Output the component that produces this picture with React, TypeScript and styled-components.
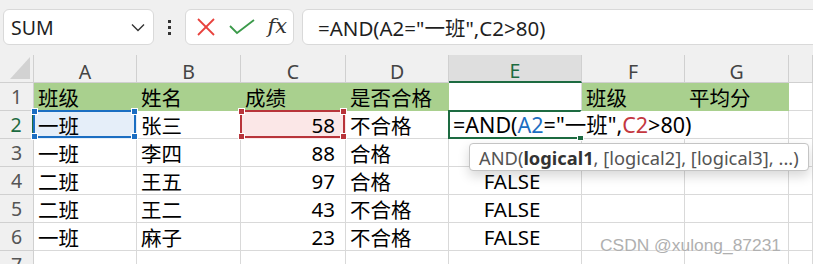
import React from "react"
import styled, { createGlobalStyle } from "styled-components"

const GlobalStyle = createGlobalStyle`
  body {
    margin: 0;
    background: #f0f0f0;
    font-family: "Noto Sans", "Noto Sans CJK SC", sans-serif;
    overflow: hidden;
  }
`

const COLS = ["A", "B", "C", "D", "E", "F", "G", ""]
const GREEN = "#a9d08e"

type Row = { cells: (string | number)[] }

const header = ["班级", "姓名", "成绩", "是否合格", "", "班级", "平均分", ""]
const data: Row[] = [
  { cells: ["一班", "张三", 58, "不合格", "", "", "", ""] },
  { cells: ["一班", "李四", 88, "合格", "", "", "", ""] },
  { cells: ["二班", "王五", 97, "合格", "FALSE", "", "", ""] },
  { cells: ["二班", "王二", 43, "不合格", "FALSE", "", "", ""] },
  { cells: ["一班", "麻子", 23, "不合格", "FALSE", "", "", ""] },
  { cells: ["", "", "", "", "", "", "", ""] },
]

function App() {
  return (
    <>
      <GlobalStyle />
      <Page>
        <Toolbar>
          <NameBox>
            <NameText>SUM</NameText>
            <svg width="14" height="9" viewBox="0 0 14 9">
              <polyline points="1,1.5 7,7.5 13,1.5" fill="none" stroke="#333" strokeWidth="1.4" />
            </svg>
          </NameBox>
          <Dots>
            <i />
            <i />
            <i />
          </Dots>
          <ActionBox>
            <svg width="20" height="20" viewBox="0 0 20 20">
              <line x1="2" y1="2" x2="18" y2="18" stroke="#e8413c" strokeWidth="1.8" />
              <line x1="18" y1="2" x2="2" y2="18" stroke="#e8413c" strokeWidth="1.8" />
            </svg>
            <svg width="26" height="16" viewBox="0 0 26 16">
              <polyline points="1,7 8,14 25,1" fill="none" stroke="#3b9a4a" strokeWidth="1.8" />
            </svg>
            <Fx>fx</Fx>
          </ActionBox>
          <FormulaBox>=AND(A2="一班",C2&gt;80)</FormulaBox>
        </Toolbar>

        <Sheet>
          <Corner>
            <svg width="20" height="22" viewBox="0 0 20 22">
              <polygon points="20,0 20,22 0,22" fill="#d2d2d2" />
            </svg>
          </Corner>
          {COLS.map((c, i) => (
            <ColHead key={i} $active={c === "E"}>{c}</ColHead>
          ))}

          <RowHead>1</RowHead>
          {header.map((t, i) => (
            <Cell key={i} $fill={t !== "" && i < 7 ? GREEN : undefined}>{t}</Cell>
          ))}

          {data.map((row, r) => (
            <React.Fragment key={r}>
              <RowHead $active={r === 0}>{r + 2}</RowHead>
              {row.cells.map((v, c) => {
                if (r === 0 && c === 0) {
                  return (
                    <Cell key={c} $fill="#e5eef9">
                      {v}
                      <RefBox $color="#1b6ec2"><Handles $color="#1b6ec2" /></RefBox>
                    </Cell>
                  )
                }
                if (r === 0 && c === 2) {
                  return (
                    <Cell key={c} $fill="#fbe7e7" $align="right">
                      {v}
                      <RefBox $color="#b8343a"><Handles $color="#b8343a" /></RefBox>
                    </Cell>
                  )
                }
                if (r === 0 && c === 4) {
                  return (
                    <EditCell key={c}>
                      <EditText>
                        =AND(<Ref $color="#1b6ec2">A2</Ref>="一班",<Ref $color="#c4373f">C2</Ref>&gt;80)
                      </EditText>
                      <FillHandle />
                    </EditCell>
                  )
                }
                return (
                  <Cell
                    key={c}
                    $align={typeof v === "number" ? "right" : c === 4 ? "center" : "left"}
                    $noRight={r === 0 && c === 5}
                  >
                    {v}
                  </Cell>
                )
              })}
            </React.Fragment>
          ))}
        </Sheet>

        <Tip>
          AND(<b>logical1</b>, [logical2], [logical3], ...)
        </Tip>
        <Watermark>CSDN @xulong_87231</Watermark>
      </Page>
    </>
  )
}

function Handles(props: { $color: string }) {
  return (
    <>
      <Knob $color={props.$color} style={{ left: -4, top: -4 }} />
      <Knob $color={props.$color} style={{ right: -4, top: -4 }} />
      <Knob $color={props.$color} style={{ left: -4, bottom: -4 }} />
      <Knob $color={props.$color} style={{ right: -4, bottom: -4 }} />
    </>
  )
}

const Page = styled.div`
  position: relative;
  width: 813px;
  height: 264px;
  overflow: hidden;
  background: #f0f0f0;
`

const Toolbar = styled.div`
  display: flex;
  align-items: center;
  height: 55px;
  padding: 9px 0 10px 3px;
  box-sizing: border-box;
`

const Box = styled.div`
  height: 36px;
  box-sizing: border-box;
  background: #fff;
  border: 1px solid #d9d9d9;
  border-radius: 6px;
  display: flex;
  align-items: center;
`

const NameBox = styled(Box)`
  width: 151px;
  flex: none;
  justify-content: space-between;
  padding: 0 8px 0 7px;
`

const NameText = styled.span`
  font-size: 19.5px;
  color: #1f1f1f;
`

const Dots = styled.div`
  width: 31px;
  flex: none;
  display: flex;
  flex-direction: column;
  align-items: center;
  gap: 3px;

  i {
    display: block;
    width: 3px;
    height: 3px;
    background: #333;
  }
`

const ActionBox = styled(Box)`
  width: 109px;
  flex: none;
  padding: 0 6px 0 10px;
  justify-content: space-between;
`

const Fx = styled.span`
  font-family: "DejaVu Serif", "Liberation Serif", serif;
  font-style: italic;
  font-size: 21px;
  color: #333;
  margin-top: -3px;
`

const FormulaBox = styled(Box)`
  flex: none;
  width: 560px;
  margin-left: 8px;
  padding-left: 15px;
  font-size: 20.5px;
  color: #1f1f1f;
  white-space: nowrap;
`

const Sheet = styled.div`
  display: grid;
  grid-template-columns: 34px 103px 104px 105px 103px 133px 103px 104px 1fr;
  grid-auto-rows: 28px;
`

const Corner = styled.div`
  box-sizing: border-box;
  border-right: 1px solid #d0d0d0;
  border-bottom: 1px solid #d0d0d0;
  display: flex;
  align-items: flex-end;
  justify-content: flex-end;
  padding: 0 3px 3px 0;
`

const ColHead = styled.div<{ $active?: boolean }>`
  box-sizing: border-box;
  display: flex;
  align-items: center;
  justify-content: center;
  padding-top: 5px;
  font-size: 19.5px;
  color: ${(p) => (p.$active ? "#1d6b41" : "#444")};
  background: ${(p) => (p.$active ? "#dedede" : "#f0f0f0")};
  border-right: 1px solid #d0d0d0;
  border-bottom: ${(p) => (p.$active ? "2px solid #1d6b41" : "1px solid #d0d0d0")};
`

const RowHead = styled.div<{ $active?: boolean }>`
  box-sizing: border-box;
  display: flex;
  align-items: center;
  justify-content: center;
  font-size: 19.5px;
  color: ${(p) => (p.$active ? "#1d6b41" : "#555")};
  border-right: ${(p) => (p.$active ? "2px solid #1d6b41" : "1px solid #d0d0d0")};
  border-bottom: 1px solid #d0d0d0;
`

const Cell = styled.div<{ $fill?: string; $align?: "left" | "right" | "center"; $noRight?: boolean }>`
  position: relative;
  box-sizing: border-box;
  display: flex;
  align-items: center;
  justify-content: ${(p) => (p.$align === "right" ? "flex-end" : p.$align === "center" ? "center" : "flex-start")};
  padding: 0 10px 0 4px;
  font-size: 20.5px;
  color: #000;
  white-space: nowrap;
  background: ${(p) => p.$fill ?? "#fff"};
  border-right: 1px solid ${(p) => (p.$noRight ? "#fff" : p.$fill ?? "#d9d9d9")};
  border-bottom: 1px solid ${(p) => p.$fill ?? "#d9d9d9"};
`

const EditCell = styled.div`
  position: relative;
  z-index: 3;
  box-sizing: border-box;
  display: flex;
  align-items: center;
  padding-left: 3px;
  background: #fff;
  border: 2px solid #1d6b41;
  border-right-color: #fff;
  margin: -1px 0 0 -1px;
`

const EditText = styled.span`
  position: relative;
  z-index: 1;
  font-size: 21.5px;
  line-height: 22px;
  color: #000;
  white-space: nowrap;
  background: #fff;
  padding-right: 2px;
`

const Ref = styled.span<{ $color: string }>`
  color: ${(p) => p.$color};
`

const FillHandle = styled.span`
  position: absolute;
  right: -4px;
  bottom: -4px;
  width: 5px;
  height: 5px;
  background: #1d6b41;
  border: 1px solid #fff;
`

const RefBox = styled.span<{ $color: string }>`
  position: absolute;
  inset: -1px 0 0 -1px;
  border: 2px solid ${(p) => p.$color};
  z-index: 2;
`

const Knob = styled.span<{ $color: string }>`
  position: absolute;
  width: 5px;
  height: 5px;
  background: ${(p) => p.$color};
  border: 1px solid #fff;
`

const Tip = styled.div`
  position: absolute;
  left: 469px;
  top: 143px;
  z-index: 5;
  height: 28px;
  box-sizing: border-box;
  padding: 0 9px;
  display: flex;
  align-items: center;
  background: #fff;
  border: 1px solid #c4c4c4;
  border-radius: 4px;
  box-shadow: 0 5px 12px rgba(0, 0, 0, 0.16);
  font-size: 18.3px;
  color: #555;
  white-space: nowrap;

  b {
    color: #333;
    font-weight: 700;
  }
`

const Watermark = styled.div`
  position: absolute;
  left: 600px;
  top: 235px;
  font-family: "Liberation Sans", Arial, sans-serif;
  font-size: 17.4px;
  color: #b0b0b0;
  text-shadow: 0 0 1px #fff;
  z-index: 6;
`

export default App
